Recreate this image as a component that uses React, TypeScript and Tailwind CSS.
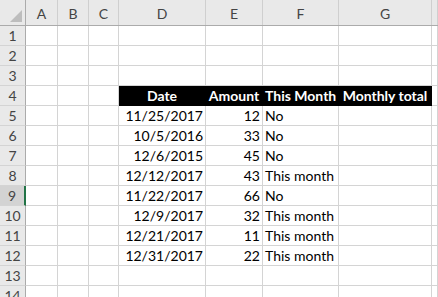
import React from "react";

const cols = ["A", "B", "C", "D", "E", "F", "G", ""];

// rows 5..12 of the sheet
const data: { date: string; amount: number; month: string }[] = [
  { date: "11/25/2017", amount: 12, month: "No" },
  { date: "10/5/2016", amount: 33, month: "No" },
  { date: "12/6/2015", amount: 45, month: "No" },
  { date: "12/12/2017", amount: 43, month: "This month" },
  { date: "11/22/2017", amount: 66, month: "No" },
  { date: "12/9/2017", amount: 32, month: "This month" },
  { date: "12/21/2017", amount: 11, month: "This month" },
  { date: "12/31/2017", amount: 22, month: "This month" },
];

const gridCols = "grid grid-cols-[26px_32px_31px_30px_87px_57px_76px_93px_1fr]";

function RowHead({ n, selected }: { n: number; selected?: boolean }) {
  return (
    <div
      className={`h-5 flex items-center justify-center border-b border-b-[#d4d4d4] text-[#444] ${
        selected ? "bg-[#d3d3d3] border-r-2 border-r-[#217346]" : "bg-[#e9e9e9] border-r border-r-[#ababab]"
      }`}
    >
      {n}
    </div>
  );
}

function Cell({ children, className = "" }: { children?: React.ReactNode; className?: string }) {
  return (
    <div className={`h-5 border-r border-b border-[#d4d4d4] px-[2px] leading-[19px] whitespace-nowrap overflow-hidden ${className}`}>
      {children}
    </div>
  );
}

export default function App() {
  const rows = Array.from({ length: 14 }, (_, i) => i + 1);

  return (
    <div
      className="w-[438px] h-[297px] overflow-hidden bg-white text-[14px] text-black"
      style={{ fontFamily: "Lato, 'Liberation Sans', sans-serif" }}
    >
      {/* column headers */}
      <div className={`${gridCols} h-[26px] bg-[#e9e9e9] border-b border-[#ababab]`}>
        <div className="relative border-r border-[#ababab]">
          <svg className="absolute right-[3px] bottom-[3px]" width="12" height="12" viewBox="0 0 12 12">
            <polygon points="12,0 12,12 0,12" fill="#bdbdbd" />
          </svg>
        </div>
        {cols.map((c, i) => (
          <div key={i} className="flex items-center justify-center border-r border-[#cfcfcf] text-[#444] pt-px">
            {c}
          </div>
        ))}
      </div>

      {rows.map((r) => {
        const d = r >= 5 && r <= 12 ? data[r - 5] : null;
        const isHead = r === 4;
        return (
          <div key={r} className={gridCols}>
            <RowHead n={r} selected={r === 9} />
            <Cell />
            <Cell />
            <Cell />
            {isHead ? (
              <>
                <Cell className="bg-black border-black text-white font-bold text-center">Date</Cell>
                <Cell className="bg-black border-black text-white font-bold text-center px-0">Amount</Cell>
                <Cell className="bg-black border-black text-white font-bold text-center px-0">This Month</Cell>
                <Cell className="bg-black border-black text-white font-bold text-center">Monthly total</Cell>
              </>
            ) : (
              <>
                <Cell className="text-right">{d?.date}</Cell>
                <Cell className="text-right">{d?.amount}</Cell>
                <Cell>{d?.month}</Cell>
                <Cell />
              </>
            )}
            <Cell />
          </div>
        );
      })}
    </div>
  );
}
